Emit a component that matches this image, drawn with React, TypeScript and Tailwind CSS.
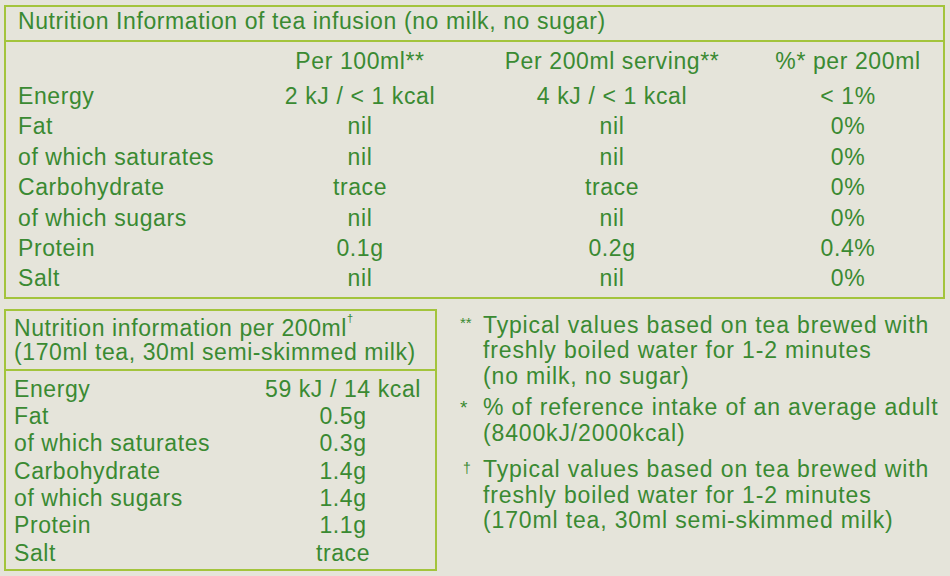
// Nutrition label from a tea box

const infusionHead: [string, string, string] = ['Per 100ml**', 'Per 200ml serving**', '%* per 200ml']

const infusionRows: [string, string, string, string][] = [
  ['Energy', '2 kJ / < 1 kcal', '4 kJ / < 1 kcal', '< 1%'],
  ['Fat', 'nil', 'nil', '0%'],
  ['of which saturates', 'nil', 'nil', '0%'],
  ['Carbohydrate', 'trace', 'trace', '0%'],
  ['of which sugars', 'nil', 'nil', '0%'],
  ['Protein', '0.1g', '0.2g', '0.4%'],
  ['Salt', 'nil', 'nil', '0%'],
]

const milkRows: [string, string][] = [
  ['Energy', '59 kJ / 14 kcal'],
  ['Fat', '0.5g'],
  ['of which saturates', '0.3g'],
  ['Carbohydrate', '1.4g'],
  ['of which sugars', '1.4g'],
  ['Protein', '1.1g'],
  ['Salt', 'trace'],
]

const notes: { mark: string; markCls: string; lines: string[]; gap: string }[] = [
  {
    mark: '**',
    markCls: 'text-[15px] leading-[20px]',
    gap: 'mt-0',
    lines: ['Typical values based on tea brewed with', 'freshly boiled water for 1-2 minutes', '(no milk, no sugar)'],
  },
  {
    mark: '*',
    markCls: 'text-[19px] leading-[26px]',
    gap: 'mt-[6px]',
    lines: ['% of reference intake of an average adult', '(8400kJ/2000kcal)'],
  },
  {
    mark: '†',
    markCls: 'text-[14px] leading-[22px] pl-[3px]',
    gap: 'mt-[11px]',
    lines: ['Typical values based on tea brewed with', 'freshly boiled water for 1-2 minutes', '(170ml tea, 30ml semi-skimmed milk)'],
  },
]

export default function App() {
  return (
    <div className="w-[950px] h-[576px] overflow-hidden bg-[#e5e4da] pt-[5px] pl-[4px] text-[23px] tracking-[0.6px] text-[#3a8a32] font-['Liberation_Sans',Arial,sans-serif]">
      {/* ── tea infusion table ── */}
      <div className="w-[941px] border-2 border-[#a3c43c]">
        <div className="pl-[12px] pb-[4px] leading-[29px] border-b-2 border-[#a3c43c]">
          Nutrition Information of tea infusion (no milk, no sugar)
        </div>
        <div className="pl-[12px] pt-[2px] pb-[3px] grid grid-cols-[236px_212px_292px_180px]">
          <div className="contents leading-[35px]">
            <div className="pb-[2px]" />
            {infusionHead.map((h, i) => (
              <div key={i} className="text-center pb-[2px]">
                {h}
              </div>
            ))}
          </div>
          {infusionRows.map((r, i) => (
            <div key={i} className="contents leading-[30.4px]">
              <div>{r[0]}</div>
              <div className="text-center">{r[1]}</div>
              <div className="text-center">{r[2]}</div>
              <div className="text-center">{r[3]}</div>
            </div>
          ))}
        </div>
      </div>

      <div className="mt-[10px] flex gap-[23px]">
        {/* ── with milk table ── */}
        <div className="w-[433px] shrink-0 border-2 border-[#a3c43c]">
          <div className="pl-[8px] pt-[5px] pb-[5px] leading-[24px] border-b-2 border-[#a3c43c]">
            <div>
              Nutrition information per 200ml<sup className="text-[11px] align-[8px]">†</sup>
            </div>
            <div>(170ml tea, 30ml semi-skimmed milk)</div>
          </div>
          <div className="pl-[8px] pt-[5px] pb-[2px] grid grid-cols-[244px_170px] leading-[27.3px]">
            {milkRows.map((r, i) => (
              <div key={i} className="contents">
                <div>{r[0]}</div>
                <div className="text-center">{r[1]}</div>
              </div>
            ))}
          </div>
        </div>

        {/* ── footnotes ── */}
        <div className="flex flex-col leading-[25.5px] mt-[4px] tracking-[0.85px]">
          {notes.map((n, i) => (
            <div key={i} className={`flex ${n.gap}`}>
              <div className={`w-[23px] shrink-0 tracking-normal ${n.markCls}`}>{n.mark}</div>
              <div>
                {n.lines.map((l, j) => (
                  <div key={j}>{l}</div>
                ))}
              </div>
            </div>
          ))}
        </div>
      </div>
    </div>
  )
}
